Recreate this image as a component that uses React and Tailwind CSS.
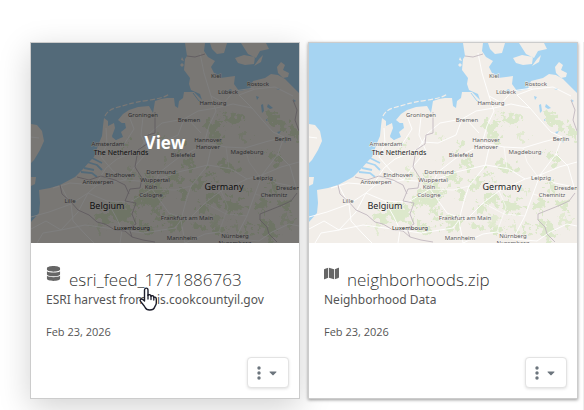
import React from 'react'
import { FaDatabase, FaMap, FaCaretDown } from 'react-icons/fa'

const datasets = [
    {
        title: 'esri_feed_1771886763',
        description: 'ESRI harvest from gis.cookcountyil.gov',
        date: 'Feb 23, 2026',
        icon: FaDatabase,
        active: true,
    },
    {
        title: 'neighborhoods.zip',
        description: 'Neighborhood Data',
        date: 'Feb 23, 2026',
        icon: FaMap,
        active: false,
    },
]

const cities = [
    { name: 'Kiel', x: 185, y: 35 },
    { name: 'Lübeck', x: 197, y: 51 },
    { name: 'Rostock', x: 227, y: 43 },
    { name: 'Hamburg', x: 182, y: 62 },
    { name: 'Bremen', x: 158, y: 79 },
    { name: 'Groningen', x: 112, y: 74 },
    { name: 'Berlin', x: 252, y: 98 },
    { name: 'Hannover', x: 177, y: 99 },
    { name: 'Hanover', x: 177, y: 106 },
    { name: 'Bielefeld', x: 152, y: 114 },
    { name: 'Magdeburg', x: 216, y: 111 },
    { name: 'Amsterdam', x: 77, y: 103 },
    { name: 'Dortmund', x: 130, y: 131 },
    { name: 'Wuppertal', x: 124, y: 139 },
    { name: 'Köln', x: 120, y: 146 },
    { name: 'Cologne', x: 120, y: 154 },
    { name: 'Eindhoven', x: 89, y: 134 },
    { name: 'Antwerpen', x: 67, y: 141 },
    { name: 'Lille', x: 39, y: 160 },
    { name: 'Leipzig', x: 232, y: 137 },
    { name: 'Dresden', x: 257, y: 147 },
    { name: 'Chemnitz', x: 243, y: 154 },
    { name: 'Frankfurt am Main', x: 156, y: 177 },
    { name: 'Mannheim', x: 151, y: 197 },
    { name: 'Nürnberg', x: 204, y: 195 },
    { name: 'Nuremberg', x: 204, y: 202 },
]

const MapThumbnail = ({ id }) => (
    <svg viewBox="0 0 268 200" preserveAspectRatio="xMidYMid slice" className="block h-full w-full" role="img" aria-label="Map preview">
        <defs>
            <filter id={`woods-${id}`} x="0" y="0" width="268" height="200" filterUnits="userSpaceOnUse">
                <feTurbulence type="fractalNoise" baseFrequency="0.14" numOctaves="3" seed="4" result="noise" />
                <feDisplacementMap in="SourceGraphic" in2="noise" scale="22" xChannelSelector="R" yChannelSelector="G" />
            </filter>
        </defs>
        <rect width="268" height="200" fill="#a6d4f2" />

        {/* Land */}
        <g fill="#f2eee9">
            <path d="M0 81L6 82L11 88L13 98L9 107L3 117L0 120ZM0 134L5 134L4 141L0 143Z" />
            <path d="M0 179L8 170L9 160L8 147L19 145L29 142L44 134L53 125L59 118L63 114L68 100L71 93L72 83L73 75L77 78L77 83L83 80L84 85L81 93L85 97L90 92L88 86L92 81L87 77L92 71L98 67L107 64L118 63L122 70L124 58L130 56L136 55L143 55L144 63L147 65L148 58L152 55L153 49L163 49L171 57L169 51L160 47L158 41L159 35L153 27L154 16L156 13L154 0H174L173 8L177 14L184 18L180 24L183 30L189 35L204 33L203 41L208 48L219 46L222 38L234 35L240 31L247 32L254 36L266 48L268 50V200H0Z" />
            <path d="M179 0L181 6L186 11L193 10L196 0ZM204 15L213 12L224 14L223 21L214 22L207 20ZM210 0L217 11L225 15L229 8L238 6L235 0ZM223 23L228 16L232 12L230 19ZM246 24L250 19L254 22L252 27L258 30L257 34L252 35L247 30Z" />
            <path d="M151 14L153 18L150 17ZM149 22L151 20L153 22L151 24Z" />
        </g>
        <g fill="none" stroke="#f2eee9" strokeWidth="1.2" strokeDasharray="5 2">
            <path d="M74 73Q77 67 84 65T98 61T119 57T138 51" />
        </g>
        <g fill="none" stroke="#a6d4f2" strokeWidth="1.8">
            <path d="M53 125L63 127M56 119L66 122L71 127M61 115L71 120M50 129L61 130L66 134" />
            <path d="M162 50L168 58L177 61" strokeWidth="1" />
        </g>
        <path d="M87 80L94 80L95 85L90 89L92 94L85 97L81 94L85 88Z" fill="#a6d4f2" />

        {/* Woodland */}
        <g fill="#d5e7c1" opacity="0.75" filter={`url(#woods-${id})`}>
            <path d="M177 78L188 72L192 82L185 88L193 93L188 101L179 95L174 85Z" />
            <path d="M191 72L205 70L214 77L207 82L197 80ZM235 69L247 72L256 79L253 88L244 83L237 76ZM258 84L268 87V96L258 92Z" />
            <path d="M186 116L197 119L210 127L205 131L191 127ZM157 115L163 121L160 127L151 122Z" />
            <path d="M116 134L126 138L133 146L138 151L130 157L125 168L117 160L108 166L101 157L113 148Z" />
            <path d="M85 159L96 161L102 170L99 180L88 176L76 180L67 177L64 170L78 167Z" />
            <path d="M151 147L158 150L153 158L146 155ZM163 137L174 136L172 145L161 147ZM169 159L179 162L175 170L165 168Z" />
            <path d="M197 155L211 158L216 165L204 173L197 166ZM224 159L234 157L238 164L228 171Z" />
            <path d="M137 175L147 170L154 180L147 190L138 187ZM164 179L174 184L168 192L162 188ZM110 180L122 182L121 190L109 192Z" />
            <path d="M240 140L250 143L245 149L237 146ZM243 110L252 114L248 120L240 117ZM92 99L98 98L99 106L93 107ZM231 176L241 180L248 190L243 199L232 192L226 184ZM144 103L151 99L155 104L148 108Z" />
            <path d="M138 128L146 130L150 138L141 142ZM176 150L186 152L190 160L180 162ZM184 180L194 182L196 192L186 194ZM214 182L222 184L220 194L211 191ZM120 168L132 166L130 176L122 178ZM176 128L186 132L180 138ZM250 158L262 162L258 168L248 165Z" />
        </g>
        <g fill="#dfeacd" opacity="0.8" filter={`url(#woods-${id})`}>
            <path d="M181 171L188 175L187 184L179 181ZM202 178L208 180L206 187L199 184ZM255 171L262 174L258 184L251 181ZM100 127L106 130L104 136L97 134ZM131 113L136 117L133 121ZM210 92L217 95L215 101L207 97ZM215 147L221 150L218 154ZM61 181L70 184L68 188ZM128 90L134 93L132 99ZM230 107L236 109L233 113Z" />
        </g>

        {/* Lakes */}
        <g fill="#a6d4f2">
            <path d="M237 61L242 65L239 66L236 64ZM230 62L232 61L233 68L231 70ZM225 53L228 54L226 57ZM245 46L248 45L249 47ZM196 49L199 46L201 47L198 51ZM262 56L265 58L263 59ZM253 97L255 98L254 100ZM246 89L250 88L248 91ZM235 76L237 77L235 78Z" />
        </g>

        {/* Roads */}
        <g fill="none" stroke="#fff" strokeWidth="0.9">
            <path d="M169 10L173 30L180 53L185 68L178 83L174 97L180 105L176 123L160 143L155 158L150 177L154 200" />
            <path d="M185 65L202 61L221 65L233 79L242 89L253 94M185 65L167 68L153 76L131 80L119 90L109 106L86 116L75 125L64 142L39 140L22 145" />
            <path d="M174 100L195 104L214 105L234 99L253 94M221 65L208 52L224 46L244 44L262 53M180 53L193 60L203 48L223 45" />
            <path d="M253 94L247 111L231 132L216 136L190 148L174 160L157 177L138 170L128 156L121 146L129 129L147 115L174 101" />
            <path d="M231 132L246 140L265 144M231 132L224 151L216 173L204 196M216 136L200 126L177 122L147 129L121 139L94 137L66 142L57 150L40 161L18 169L0 174" />
            <path d="M121 146L99 159L76 158L57 150L47 169L30 187L12 190L6 200M76 158L85 174L91 187L89 200M40 161L42 178L54 191L63 200M0 186L15 178L30 187L54 182L91 187L112 190L144 185L150 177" />
            <path d="M75 85L76 101L70 114L82 128L94 137M98 73L103 86L92 103L76 101M112 74L110 92L117 108L106 121L94 137M153 76L147 92L129 100L113 99M158 77L170 90" />
            <path d="M204 196L188 189L174 191L154 200M204 196L228 198L241 189L258 181L268 183M247 111L259 123L265 144M231 132L250 124L268 119M0 94L8 95M30 143L39 160" />
            <path d="M190 148L197 164L188 189M174 160L195 171L216 173M224 151L238 155L253 150M121 146L144 147L160 143M214 105L218 119L229 134M195 104L198 126" strokeWidth="0.6" />
        </g>

        {/* Borders */}
        <g fill="none" stroke="#c2b8c0" strokeWidth="0.9">
            <path d="M156 13L164 14L174 11M124 69L124 90L117 92L116 101L107 107L104 124L111 135L109 145L99 146L94 158L105 160L101 171L105 181L98 185L101 194" />
            <path d="M29 142L31 151L40 159L47 167L58 172L66 179L74 181L84 187L94 188L101 194L112 197L124 199M46 134L58 137L70 133L84 137L94 142L98 151" />
            <path d="M266 150L260 158L249 163L239 167L229 171L229 177L236 184L238 191L246 199M262 57L266 67L264 77L268 88" />
        </g>

        {/* Labels */}
        <g
            textAnchor="middle"
            fontFamily="'Noto Sans', sans-serif"
            fontSize="6"
            fill="#5c5b60"
            stroke="#f7f4f0"
            strokeWidth="1"
            paintOrder="stroke"
        >
            {cities.map((city) => (
                <text key={city.name} x={city.x} y={city.y}>{city.name}</text>
            ))}
            <g fill="#222">
                <text x="90" y="112" fontSize="7">The Netherlands</text>
                <text x="76" y="166" fontSize="9">Belgium</text>
                <text x="193" y="147" fontSize="9">Germany</text>
                <text x="101" y="187" fontSize="6">Luxembourg</text>
            </g>
        </g>
    </svg>
)

const HandCursor = () => (
    <svg viewBox="0 0 20 24" className="absolute left-[107px] top-[244px] h-6 w-5" aria-hidden="true">
        <path
            d="M6.5 14V3.2C6.5 .4 10 .4 10 3.2V8.5C10.6 7.2 13 7.4 13 9.3C13.8 8.2 15.7 8.5 15.8 10.3C17 9.7 18.3 10.5 18.3 12V16C18.3 18 17 19 16.5 20.5C16 22 13.8 23 11.8 23C9.5 23 7.8 22 7 20.2C6.1 18.4 4.5 17 2.4 14.2C1.4 12.9 3 11.3 4.5 12.3Z"
            fill="#fff"
            stroke="#1d1d2b"
            strokeWidth="1.4"
            strokeLinejoin="round"
        />
        <path d="M10 8V12M13 9V12.5M15.8 10.3V13" fill="none" stroke="#1d1d2b" strokeWidth="1.3" strokeLinecap="round" />
    </svg>
)

const DatasetCard = ({ dataset, id }) => {
    const Icon = dataset.icon
    return (
        <article
            className={`relative min-w-0 border border-[#ccc] bg-white ${
                dataset.active
                    ? 'shadow-[0_8px_30px_rgba(0,0,0,0.18)]'
                    : 'shadow-[0_1px_3px_rgba(0,0,0,0.4)]'
            }`}
        >
            <div className="grid h-[200px] overflow-hidden">
                <div className="col-start-1 row-start-1 h-[200px]">
                    <MapThumbnail id={id} />
                </div>
                {dataset.active && (
                    <a
                        href="#view"
                        className="z-10 col-start-1 row-start-1 flex items-center justify-center bg-black/50 text-[17px] font-bold text-white"
                    >
                        View
                    </a>
                )}
            </div>

            <div className="px-[15px] pt-5">
                <div className="flex items-start gap-2">
                    <Icon className="mt-[3px] h-[15px] w-auto shrink-0 text-[#666]" />
                    <h2 className="mt-1 text-[17px] leading-[25px] font-light text-[#333]">{dataset.title}</h2>
                </div>
                <p className="font-['Noto_Sans',sans-serif] text-xs leading-4 whitespace-nowrap text-[#555]">{dataset.description}</p>
                <p className="mt-4 text-[11px] leading-4 text-[#555]">{dataset.date}</p>
            </div>

            <div className="flex justify-end px-[10px] pt-[17px] pb-[10px]">
                <button
                    type="button"
                    aria-label="Dataset actions"
                    className="flex h-[31px] w-[42px] items-center justify-center gap-1.5 rounded border border-[#e3e3e3] bg-white text-[#6c757d] shadow-[0_1px_3px_rgba(0,0,0,0.12)]"
                >
                    <svg viewBox="0 0 4 14" className="h-[14px] w-1 fill-current">
                        <circle cx="2" cy="2" r="1.7" />
                        <circle cx="2" cy="7" r="1.7" />
                        <circle cx="2" cy="12" r="1.7" />
                    </svg>
                    <FaCaretDown className="size-3" />
                </button>
            </div>

            {dataset.active && <HandCursor />}
        </article>
    )
}

const App = () => (
    <main className="flex min-h-screen items-start overflow-hidden bg-white pt-[42px] pl-[30px] font-['Open_Sans','Noto_Sans',sans-serif]">
        <div className="grid min-w-0 flex-1 grid-cols-2 gap-2">
            {datasets.map((dataset, index) => (
                <DatasetCard key={dataset.title} dataset={dataset} id={index} />
            ))}
        </div>
        {/* Edge of the next card in the row */}
        <div className="ml-[5px] w-px self-stretch bg-[#eee]" />
    </main>
)

export default App
